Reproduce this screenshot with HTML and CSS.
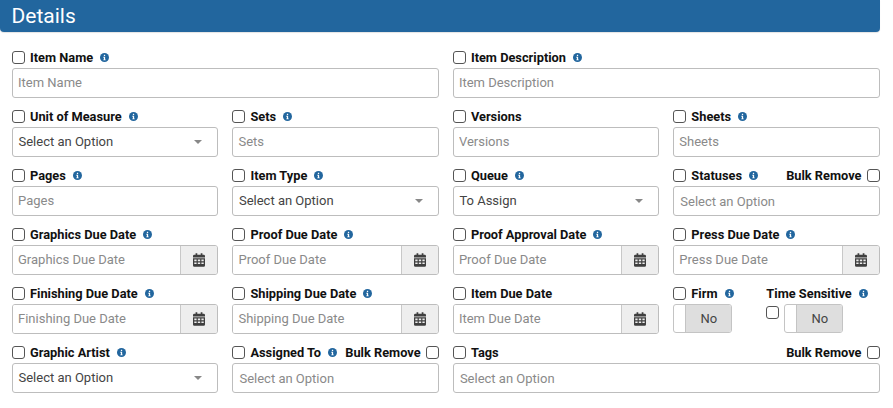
FILE: index.html
```html
<!DOCTYPE html>
<html lang="en">
<head>
<meta charset="utf-8">
<title>Details</title>
<link rel="stylesheet" href="styles.css">
</head>
<body>
<svg class="defs" width="0" height="0" aria-hidden="true">
  <symbol id="info" viewBox="0 0 16 16"><circle cx="8" cy="8" r="8" fill="#22669e"/><rect x="6.9" y="3" width="2.3" height="2.3" rx=".6" fill="#fff"/><path d="M5.9 6.8h3.2v4.6h1v1.5H5.9v-1.5h1V8.3h-1z" fill="#fff"/></symbol>
  <symbol id="cal" viewBox="0 0 14 16"><path fill="#3f3f3f" fill-rule="evenodd" d="M3 0h2v2h4V0h2v2h1.5A1.5 1.5 0 0 1 14 3.500V5H0V3.500A1.500 1.500 0 0 1 1.500 2H3zM0 6h14v8.500a1.500 1.500 0 0 1-1.500 1.500h-11A1.500 1.500 0 0 1 0 14.500zm1.500 1.500v2h2.700v-2zm4.100 0v2h2.800v-2zm4.200 0v2h2.700v-2zm-8.300 3.300v2h2.700v-2zm4.100 0v2h2.800v-2zm4.200 0v2h2.700v-2z"/></symbol>
</svg>
<main class="panel">
  <h2 class="title">Details</h2>
  <div class="grid">
    <div class="field half"><div class="lab"><input type="checkbox"><b>Item Name</b><svg class="i"><use href="#info"/></svg></div><input class="txt" placeholder="Item Name"></div>
    <div class="field half"><div class="lab"><input type="checkbox"><b>Item Description</b><svg class="i"><use href="#info"/></svg></div><input class="txt" placeholder="Item Description"></div>

    <div class="field"><div class="lab"><input type="checkbox"><b>Unit of Measure</b><svg class="i"><use href="#info"/></svg></div><div class="sel">Select an Option<span class="caret"></span></div></div>
    <div class="field"><div class="lab"><input type="checkbox"><b>Sets</b><svg class="i"><use href="#info"/></svg></div><input class="txt" placeholder="Sets"></div>
    <div class="field"><div class="lab"><input type="checkbox"><b>Versions</b></div><input class="txt" placeholder="Versions"></div>
    <div class="field"><div class="lab"><input type="checkbox"><b>Sheets</b><svg class="i"><use href="#info"/></svg></div><input class="txt" placeholder="Sheets"></div>

    <div class="field"><div class="lab"><input type="checkbox"><b>Pages</b><svg class="i"><use href="#info"/></svg></div><input class="txt" placeholder="Pages"></div>
    <div class="field"><div class="lab"><input type="checkbox"><b>Item Type</b><svg class="i"><use href="#info"/></svg></div><div class="sel">Select an Option<span class="caret"></span></div></div>
    <div class="field"><div class="lab"><input type="checkbox"><b>Queue</b><svg class="i"><use href="#info"/></svg></div><div class="sel">To Assign<span class="caret"></span></div></div>
    <div class="field"><div class="lab"><input type="checkbox"><b>Statuses</b><svg class="i"><use href="#info"/></svg><span class="bulk"><b>Bulk Remove</b><input type="checkbox"></span></div><input class="txt wide" placeholder="Select an Option"></div>

    <div class="field"><div class="lab"><input type="checkbox"><b>Graphics Due Date</b><svg class="i"><use href="#info"/></svg></div><div class="date"><input placeholder="Graphics Due Date"><span class="addon"><svg class="c"><use href="#cal"/></svg></span></div></div>
    <div class="field"><div class="lab"><input type="checkbox"><b>Proof Due Date</b><svg class="i"><use href="#info"/></svg></div><div class="date"><input placeholder="Proof Due Date"><span class="addon"><svg class="c"><use href="#cal"/></svg></span></div></div>
    <div class="field"><div class="lab"><input type="checkbox"><b>Proof Approval Date</b><svg class="i"><use href="#info"/></svg></div><div class="date"><input placeholder="Proof Due Date"><span class="addon"><svg class="c"><use href="#cal"/></svg></span></div></div>
    <div class="field"><div class="lab"><input type="checkbox"><b>Press Due Date</b><svg class="i"><use href="#info"/></svg></div><div class="date"><input placeholder="Press Due Date"><span class="addon"><svg class="c"><use href="#cal"/></svg></span></div></div>

    <div class="field"><div class="lab"><input type="checkbox"><b>Finishing Due Date</b><svg class="i"><use href="#info"/></svg></div><div class="date"><input placeholder="Finishing Due Date"><span class="addon"><svg class="c"><use href="#cal"/></svg></span></div></div>
    <div class="field"><div class="lab"><input type="checkbox"><b>Shipping Due Date</b><svg class="i"><use href="#info"/></svg></div><div class="date"><input placeholder="Shipping Due Date"><span class="addon"><svg class="c"><use href="#cal"/></svg></span></div></div>
    <div class="field"><div class="lab"><input type="checkbox"><b>Item Due Date</b></div><div class="date"><input placeholder="Item Due Date"><span class="addon"><svg class="c"><use href="#cal"/></svg></span></div></div>
    <div class="field toggles">
      <div class="tog-firm"><div class="lab"><input type="checkbox"><b>Firm</b><svg class="i"><use href="#info"/></svg></div><div class="toggle"><span class="knob"></span><span class="no">No</span></div></div>
      <div class="tog-time"><div class="lab"><b>Time Sensitive</b><svg class="i"><use href="#info"/></svg></div><div class="tog-row"><input type="checkbox"><div class="toggle"><span class="knob"></span><span class="no">No</span></div></div></div>
    </div>

    <div class="field"><div class="lab"><input type="checkbox"><b>Graphic Artist</b><svg class="i"><use href="#info"/></svg></div><div class="sel">Select an Option<span class="caret"></span></div></div>
    <div class="field"><div class="lab"><input type="checkbox"><b>Assigned To</b><svg class="i"><use href="#info"/></svg><span class="bulk"><b>Bulk Remove</b><input type="checkbox"></span></div><input class="txt wide" placeholder="Select an Option"></div>
    <div class="field half"><div class="lab"><input type="checkbox"><b>Tags</b><span class="bulk"><b>Bulk Remove</b><input type="checkbox"></span></div><input class="txt wide" placeholder="Select an Option"></div>
  </div>
</main>
</body>
</html>
```
FILE: styles.css
```css
* { box-sizing: border-box; }
html, body { margin: 0; padding: 0; background: #fff; }
body { font-family: Roboto, Lato, sans-serif; font-size: 13px; color: #222; overflow: hidden; }
.defs { position: absolute; }
.panel { width: 880px; }
.title { margin: 0; height: 32px; background: #22669e; color: #fff; font-size: 21px; font-weight: 400; line-height: 32px; padding-left: 11.500px; border-radius: 0 0 4px 4px; box-shadow: 0 1px 1px #e4e4e4; }
.grid { display: grid; grid-template-columns: repeat(4, minmax(0, 1fr)); column-gap: 14.300px; row-gap: 9px; padding: 16px 0.500px 0 12px; }
.half { grid-column: span 2; }
.lab { display: flex; align-items: center; height: 20px; padding-bottom: 2px; font-size: 12.800px; color: #111; }
.lab b { font-weight: 700; white-space: nowrap; }
.lab input[type=checkbox], .tog-row input[type=checkbox] { appearance: none; width: 13px; height: 13px; margin: 0 5px 0 0; border: 1px solid #555; border-radius: 3px; background: #fff; flex: none; }
.i { width: 9px; height: 9px; margin-left: 7px; flex: none; }
.bulk { margin-left: auto; display: flex; align-items: center; }
.bulk input[type=checkbox] { margin: 0 0 0 5px; }
.txt, .sel, .date { height: 30px; width: 100%; border: 1px solid #bdbdbd; border-radius: 3px; background: #fff; font-family: inherit; font-size: 13px; }
.txt { padding: 0 5px 1px; outline: 0; display: block; }
.txt.wide { padding: 0 6px; }
input::placeholder { color: #8a8a8a; opacity: 1; }
.sel { display: flex; align-items: center; justify-content: space-between; padding: 0 15px 1px 5.500px; color: #444; }
.caret { width: 0; height: 0; border-left: 4px solid transparent; border-right: 4px solid transparent; border-top: 4px solid #888; }
.date { display: flex; overflow: hidden; }
.date input { flex: 1; min-width: 0; border: 0; outline: 0; padding: 0 5px 1px; font: inherit; background: #fff; }
.addon { width: 37px; flex: none; background: #eee; border-left: 1px solid #c8c8c8; display: flex; align-items: center; justify-content: center; }
.c { width: 12px; height: 14px; }
.toggles { display: flex; }
.tog-firm { width: 93px; }
.toggle { display: flex; width: 59px; height: 29px; border: 1px solid #c4c4c4; border-radius: 3px; overflow: hidden; background: #fff; }
.knob { width: 12px; flex: none; border-right: 1px solid #c4c4c4; }
.no { flex: 1; background: #dedede; text-align: center; line-height: 27px; font-size: 13px; color: #444; }
.tog-row { display: flex; align-items: flex-start; }
.tog-row input[type=checkbox] { margin: 2px 5px 0 0; }
```
